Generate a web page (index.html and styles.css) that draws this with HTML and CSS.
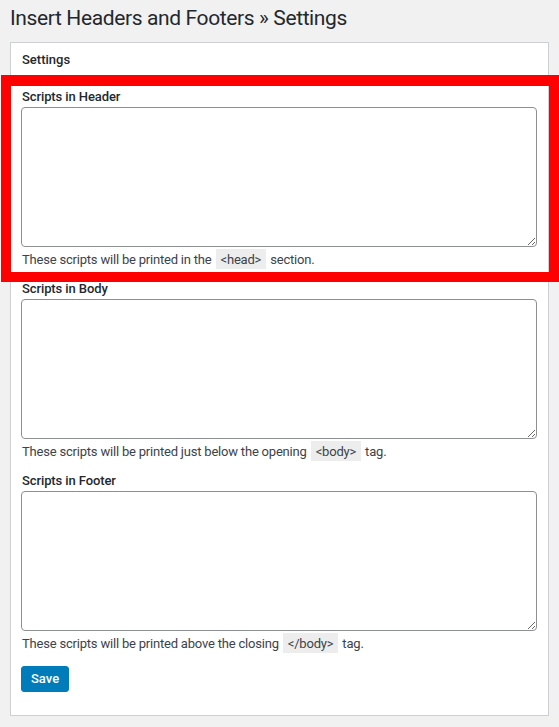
FILE: index.html
```html
<!DOCTYPE html>
<html lang="en">
<head>
<meta charset="utf-8">
<title>Insert Headers and Footers » Settings</title>
<link rel="stylesheet" href="styles.css">
</head>
<body>
<div class="wrap">
  <h1 class="page-title">Insert Headers and Footers » Settings</h1>
  <div class="panel">
    <h2 class="panel-title">Settings</h2>
    <div class="panel-body">
      <div class="field">
        <label class="field-label" for="ihaf_insert_header">Scripts in Header</label>
        <textarea id="ihaf_insert_header" class="code-area"></textarea>
        <p class="help">These scripts will be printed in the <code>&lt;head&gt;</code> section.</p>
      </div>
      <div class="field">
        <label class="field-label" for="ihaf_insert_body">Scripts in Body</label>
        <textarea id="ihaf_insert_body" class="code-area"></textarea>
        <p class="help">These scripts will be printed just below the opening <code>&lt;body&gt;</code> tag.</p>
      </div>
      <div class="field">
        <label class="field-label" for="ihaf_insert_footer">Scripts in Footer</label>
        <textarea id="ihaf_insert_footer" class="code-area"></textarea>
        <p class="help">These scripts will be printed above the closing <code>&lt;/body&gt;</code> tag.</p>
      </div>
      <div class="actions">
        <button type="button" class="button-primary">Save</button>
      </div>
    </div>
  </div>
</div>
<div class="highlight-box"></div>
</body>
</html>
```

FILE: styles.css
```css
html, body {
  margin: 0;
  padding: 0;
}

body {
  background: #f1f1f1;
  font-family: Roboto, "Noto Sans", "Liberation Sans", sans-serif;
  color: #3c434a;
  font-size: 13px;
  position: relative;
  min-height: 727px;
}

.wrap {
  padding: 0 10px 12px 10px;
}

.page-title {
  margin: 0;
  padding: 5px 0 0 0;
  font-size: 21px;
  line-height: 27px;
  font-weight: 400;
  letter-spacing: -0.38px;
  color: #23282d;
}

.panel {
  margin-top: 10px;
  background: #fff;
  border: 1px solid #ccd0d4;
}

.panel-title {
  margin: 0;
  padding: 8px 11px 0 11px;
  font-size: 13px;
  line-height: 18px;
  font-weight: 500;
  color: #23282d;
}

.panel-body {
  padding: 19px 10px 23px 10px;
  display: flex;
  flex-direction: column;
  gap: 10px;
}

.field {
  display: flex;
  flex-direction: column;
}

.field-label {
  padding-left: 1px;
  font-size: 13px;
  line-height: 18px;
  font-weight: 500;
  letter-spacing: -0.1px;
  color: #23282d;
  margin-bottom: 1px;
}

.code-area {
  display: block;
  box-sizing: border-box;
  width: 516px;
  height: 140px;
  margin: 0;
  border: 1px solid #8c8f94;
  border-radius: 4px;
  background: #fff;
  resize: vertical;
  font-family: inherit;
}

.help {
  margin: 3px 0 0 0;
  padding-left: 1px;
  font-size: 13px;
  line-height: 20px;
  letter-spacing: -0.2px;
  color: #3c434a;
}

.help code {
  font-family: Roboto, "Noto Sans", "Liberation Sans", sans-serif;
  font-size: 13px;
  background: #ededed;
  padding: 3px 5px 2px 5px;
  margin: 0 1px;
  color: #3c434a;
}

.actions {
  margin-top: 2px;
}

.button-primary {
  display: block;
  height: 26px;
  padding: 0 9px;
  border: 1px solid #007cba;
  border-radius: 3px;
  background: #007cba;
  color: #fff;
  font-family: inherit;
  font-size: 13px;
  font-weight: 500;
  line-height: 24px;
  cursor: pointer;
}

.highlight-box {
  position: absolute;
  left: 1px;
  top: 75px;
  width: 558px;
  height: 207px;
  box-sizing: border-box;
  border-style: solid;
  border-color: #ff0000;
  border-width: 11px 10px 10px 10px;
  pointer-events: none;
}
```
